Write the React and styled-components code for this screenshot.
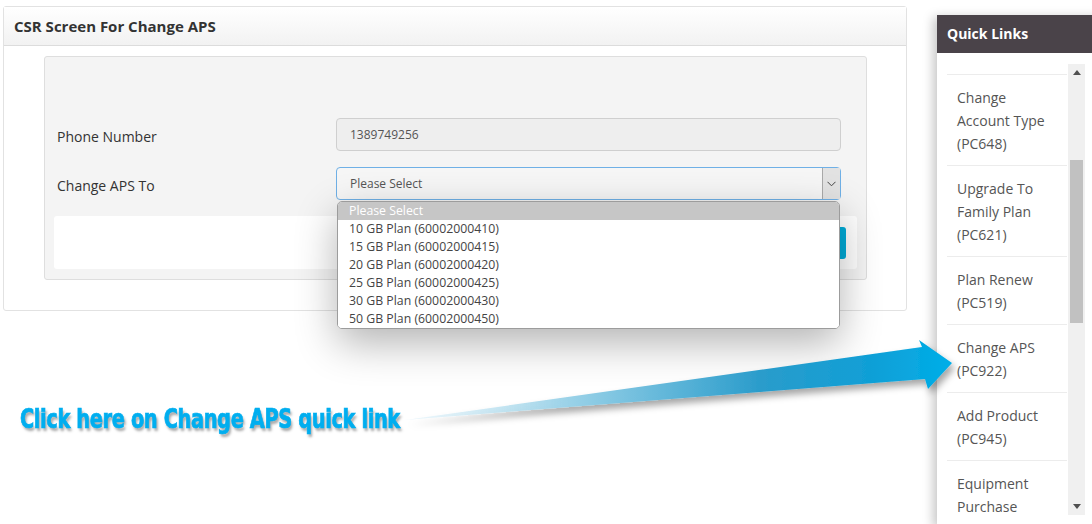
import React from "react";
import styled, { createGlobalStyle } from "styled-components";

const GlobalStyle = createGlobalStyle`
  html, body {
    margin: 0;
    padding: 0;
    background: #ffffff;
    overflow: hidden;
  }
  body {
    font-family: "Open Sans", "Noto Sans", Arial, sans-serif;
    color: #333;
  }
`;

const plans = [
  "10 GB Plan (60002000410)",
  "15 GB Plan (60002000415)",
  "20 GB Plan (60002000420)",
  "25 GB Plan (60002000425)",
  "30 GB Plan (60002000430)",
  "50 GB Plan (60002000450)",
];

const quickLinks = [
  ["Change", "Account Type", "(PC648)"],
  ["Upgrade To", "Family Plan", "(PC621)"],
  ["Plan Renew", "(PC519)"],
  ["Change APS", "(PC922)"],
  ["Add Product", "(PC945)"],
  ["Equipment", "Purchase"],
];

function App() {
  return (
    <Page>
      <GlobalStyle />
      <MainCol>
        <Panel>
          <PanelHeader>CSR Screen For Change APS</PanelHeader>
          <PanelBody>
            <Well>
              <FormRow>
                <Label>Phone Number</Label>
                <Field $readOnly>1389749256</Field>
              </FormRow>
              <FormRow>
                <Label>Change APS To</Label>
                <SelectWrap>
                  <Field $focused>
                    Please Select
                    <Caret>
                      <svg width="9" height="6" viewBox="0 0 9 6">
                        <polyline points="0.5,0.8 4.5,4.8 8.5,0.8" fill="none" stroke="#444" strokeWidth="1" />
                      </svg>
                    </Caret>
                  </Field>
                  <OptionList>
                    <Option $selected>Please Select</Option>
                    {plans.map((p) => (
                      <Option key={p}>{p}</Option>
                    ))}
                  </OptionList>
                </SelectWrap>
              </FormRow>
              <ActionBar>
                <SubmitButton>Submit</SubmitButton>
              </ActionBar>
            </Well>
          </PanelBody>
        </Panel>
      </MainCol>

      <SideCol>
        <QuickLinks>
          <QLHeader>Quick Links</QLHeader>
          <QLBody>
            <LinkList>
              {quickLinks.map((lines) => (
                <LinkItem key={lines.join(" ")}>
                  {lines.map((l) => (
                    <div key={l}>{l}</div>
                  ))}
                </LinkItem>
              ))}
            </LinkList>
            <ScrollTrack>
              <ScrollArrow>
                <svg width="8" height="5" viewBox="0 0 8 5">
                  <polygon points="0,5 4,0 8,5" fill="#505050" />
                </svg>
              </ScrollArrow>
              <ScrollThumb />
              <ScrollArrow $down>
                <svg width="8" height="5" viewBox="0 0 8 5">
                  <polygon points="0,0 8,0 4,5" fill="#505050" />
                </svg>
              </ScrollArrow>
            </ScrollTrack>
          </QLBody>
        </QuickLinks>
      </SideCol>

      <Callout>Click here on Change APS quick link</Callout>
      <ArrowLayer width="1092" height="524" viewBox="0 0 1092 524">
        <defs>
          <linearGradient id="shaft" x1="405" y1="0" x2="952" y2="0" gradientUnits="userSpaceOnUse">
            <stop offset="0" stopColor="#e4f3fa" stopOpacity="0.6" />
            <stop offset="0.3" stopColor="#9ad2e8" />
            <stop offset="0.65" stopColor="#2a9ccb" />
            <stop offset="0.85" stopColor="#109fd6" />
            <stop offset="1" stopColor="#00aee8" />
          </linearGradient>
          <filter id="shade" x="-10%" y="-50%" width="120%" height="200%">
            <feDropShadow dx="3" dy="5" stdDeviation="3.5" floodColor="#000" floodOpacity="0.35" />
          </filter>
        </defs>
        <polygon
          points="405,420 922,347 919,340 952,363 928,389 925,379"
          fill="url(#shaft)"
          filter="url(#shade)"
        />
      </ArrowLayer>
    </Page>
  );
}

const Page = styled.div`
  position: relative;
  width: 1092px;
  height: 524px;
  display: flex;
  align-items: flex-start;
  padding: 6px 0 0 3px;
  box-sizing: border-box;
`;

const MainCol = styled.div`
  width: 904px;
  flex-shrink: 0;
`;

const Panel = styled.div`
  border: 1px solid #e2e2e2;
  border-radius: 3px;
  background: #fff;
`;

const PanelHeader = styled.div`
  height: 38px;
  line-height: 39px;
  padding: 0 10px;
  font-size: 15px;
  font-weight: 700;
  color: #333;
  background: linear-gradient(to bottom, #ffffff, #f2f2f2);
  border-bottom: 1px solid #dcdcdc;
`;

const PanelBody = styled.div`
  padding: 10px 39px 30px 40px;
`;

const Well = styled.div`
  background: #f4f4f4;
  border: 1px solid #dedede;
  border-radius: 3px;
  padding: 61px 9px 10px 9px;
`;

const FormRow = styled.div`
  display: grid;
  grid-template-columns: 279px 505px;
  align-items: center;
  padding-left: 3px;
  margin-bottom: 16px;
`;

const Label = styled.div`
  font-size: 14px;
  color: #333;
  padding-top: 3px;
`;

const SelectWrap = styled.div`
  position: relative;
`;

const Field = styled.div`
  position: relative;
  height: 33px;
  box-sizing: border-box;
  display: flex;
  align-items: center;
  padding: 0 13px;
  font-size: 12px;
  color: #555;
  border-radius: 4px;
  border: 1px solid ${(p) => (p.$focused ? "#6fb0e6" : "#cfcfcf")};
  background: ${(p) => (p.$readOnly ? "#eeeeee" : "#f6f6f6")};
`;

const Caret = styled.span`
  position: absolute;
  right: 0;
  top: 0;
  bottom: 0;
  width: 17px;
  display: flex;
  align-items: center;
  justify-content: center;
  background: #e2e2e2;
  border-left: 1px solid #a9a9a9;
`;

const OptionList = styled.div`
  position: absolute;
  z-index: 5;
  top: 34px;
  left: 1px;
  right: 1px;
  background: #fff;
  border: 1px solid #9c9c9c;
  border-radius: 5px;
  overflow: hidden;
  box-shadow: 0 14px 42px rgba(0, 0, 0, 0.3);
`;

const Option = styled.div`
  height: 18px;
  line-height: 18px;
  padding: 0 11px;
  font-size: 12.3px;
  color: ${(p) => (p.$selected ? "#fff" : "#444")};
  background: ${(p) => (p.$selected ? "#c6c6c6" : "#fff")};
`;

const ActionBar = styled.div`
  margin-top: 1px;
  background: #fff;
  border-radius: 3px;
  padding: 11px 11px 10px;
  display: flex;
  justify-content: flex-end;
`;

const SubmitButton = styled.button`
  height: 32px;
  width: 90px;
  border: none;
  border-radius: 3px;
  background: #00acd9;
  color: #fff;
  font-family: inherit;
  font-size: 13px;
`;

const SideCol = styled.div`
  margin-left: 30px;
  margin-top: 9px;
  width: 170px;
  flex-shrink: 0;
`;

const QuickLinks = styled.div`
  background: #fff;
  box-shadow: -4px 2px 10px rgba(0, 0, 0, 0.22);
`;

const QLHeader = styled.div`
  height: 38px;
  line-height: 38px;
  padding: 0 10px;
  background: #4a4349;
  color: #fff;
  font-size: 14px;
  font-weight: 700;
`;

const QLBody = styled.div`
  display: flex;
  padding: 11px 0 0 10px;
  height: 462px;
  overflow: hidden;
`;

const LinkList = styled.div`
  width: 120px;
  padding-top: 10px;
  align-self: flex-start;
`;

const LinkItem = styled.div`
  padding: 11px 10px 10px;
  border-bottom: 1px solid #ececec;
  font-size: 14px;
  line-height: 23px;
  color: #555;
  &:first-child {
    border-top: 1px solid #ececec;
  }
`;

const ScrollTrack = styled.div`
  width: 17px;
  margin-left: 1px;
  height: 451px;
  background: #f0f0f0;
  display: flex;
  flex-direction: column;
  align-items: center;
`;

const ScrollArrow = styled.div`
  height: 17px;
  display: flex;
  align-items: center;
  justify-content: center;
  margin-top: ${(p) => (p.$down ? "auto" : "0")};
`;

const ScrollThumb = styled.div`
  width: 13px;
  height: 163px;
  margin-top: 79px;
  background: #c1c1c1;
`;

const Callout = styled.div`
  position: absolute;
  left: 20px;
  top: 403px;
  font-family: "DejaVu Sans Condensed", "DejaVu Sans", sans-serif;
  font-stretch: condensed;
  font-weight: 700;
  font-size: 27px;
  letter-spacing: -0.5px;
  color: #00aeef;
  -webkit-text-stroke: 0.7px #00aeef;
  white-space: nowrap;
  transform: scaleX(0.8);
  transform-origin: left center;
  text-shadow: 2px 3px 3px rgba(0, 0, 0, 0.35);
  z-index: 6;
`;

const ArrowLayer = styled.svg`
  position: absolute;
  left: 0;
  top: 0;
  z-index: 7;
  pointer-events: none;
`;

export default App;
